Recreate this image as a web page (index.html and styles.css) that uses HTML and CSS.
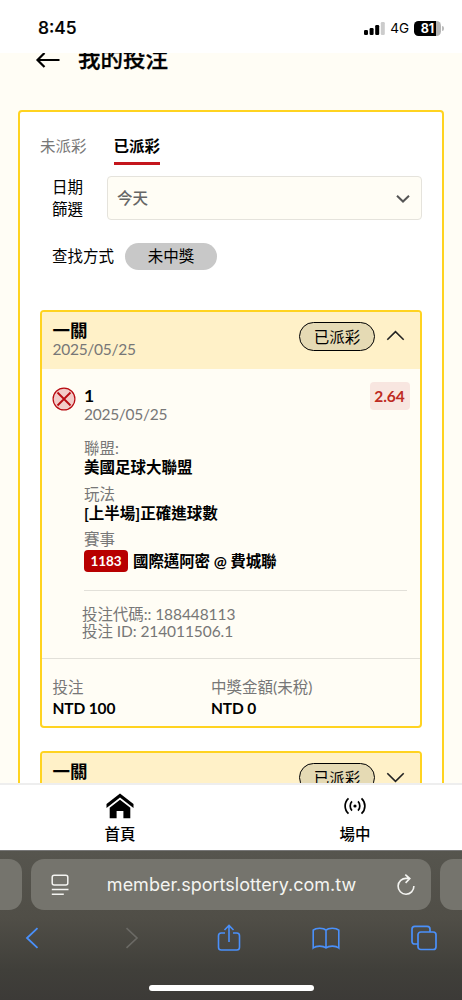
FILE: index.html
```html
<!DOCTYPE html>
<html lang="zh-Hant">
<head>
<meta charset="utf-8">
<title>我的投注</title>
<link rel="stylesheet" href="styles.css">
</head>
<body>
<div class="phone">
  <header class="status">
    <span class="clock">8:45</span>
    <div class="status-right">
      <svg class="signal" width="21" height="13" viewBox="0 0 21 13"><rect x="0" y="8" width="4" height="5" rx="1.2"/><rect x="5.6" y="6" width="4" height="7" rx="1.2"/><rect x="11.2" y="3" width="4" height="10" rx="1.2"/><rect x="16.8" y="0" width="4" height="13" rx="1.2" fill="#ccc"/></svg>
      <span class="net">4G</span>
      <span class="battery">81</span><span class="nub"></span>
    </div>
  </header>

  <main class="page">
    <div class="title-row">
      <svg width="26" height="18" viewBox="0 0 26 18" fill="none" stroke="#000" stroke-width="2.2"><path d="M24.500 9H2.500M9.500 2 2.500 9l7 7"/></svg>
      <h1 class="title">我的投注</h1>
    </div>
    <section class="panel">
      <nav class="tabs">
        <span class="tab">未派彩</span>
        <span class="tab active">已派彩</span>
      </nav>
      <div class="filter">
        <span class="filter-label">日期篩選</span>
        <div class="select"><span>今天</span>
          <svg width="14" height="9" viewBox="0 0 14 9" fill="none" stroke="#555" stroke-width="2"><path d="M1 1.700 7 7.500l6-5.800"/></svg>
        </div>
      </div>
      <div class="search">
        <span>查找方式</span><span class="chip">未中獎</span>
      </div>

      <article class="bet">
        <div class="bet-head">
          <div><div class="bet-title">一關</div><div class="date">2025/05/25</div></div>
          <div class="head-right"><span class="state">已派彩</span>
            <svg width="19" height="13" viewBox="0 0 19 13" fill="none" stroke="#222" stroke-width="1.600"><path d="M1.300 9.800 9.500 1.700l8.200 8.100"/></svg>
          </div>
        </div>
        <div class="leg">
          <svg class="lost" width="24" height="24" viewBox="0 0 24 24"><circle cx="12" cy="12" r="10.900" fill="#f2cbc8" stroke="#b80b12" stroke-width="1.200"/><path d="M5.500 5.500l13 13M18.500 5.500l-13 13" stroke="#b80b12" stroke-width="1.800"/></svg>
          <div class="leg-body">
            <div class="leg-top">
              <div><div class="num">1</div><div class="date">2025/05/25</div></div>
              <span class="odds">2.64</span>
            </div>
            <dl class="facts">
              <dt>聯盟:</dt><dd>美國足球大聯盟</dd>
              <dt>玩法</dt><dd>[上半場]正確進球數</dd>
              <dt>賽事</dt><dd class="match"><span class="code">1183</span><span>國際邁阿密 @ 費城聯</span></dd>
            </dl>
            <div class="ids"><div>投注代碼:: 188448113</div><div>投注 ID: 214011506.1</div></div>
          </div>
        </div>
        <div class="totals">
          <div><div class="t-label">投注</div><div class="t-value">NTD 100</div></div>
          <div><div class="t-label">中獎金額(未稅)</div><div class="t-value">NTD 0</div></div>
        </div>
      </article>

      <article class="bet">
        <div class="bet-head shade">
          <div><div class="bet-title">一關</div></div>
          <div class="head-right"><span class="state">已派彩</span>
            <svg width="19" height="11" viewBox="0 0 19 11" fill="none" stroke="#222" stroke-width="1.600"><path d="M1.300 1.200l8.200 8.100 8.200-8.100"/></svg>
          </div>
        </div>
      </article>
    </section>
  </main>

  <nav class="tabbar">
    <div class="tab-item">
      <svg width="28" height="26" viewBox="0 0 28 26"><path d="M14 .5 27.500 11v4L14 4.600.500 15v-4z"/><path d="M14 6.800 24.300 14.800V25.200H17.400V18h-6.800v7.200H3.700V14.800z"/></svg>
      <span>首頁</span>
    </div>
    <div class="tab-item">
      <svg width="22" height="26" viewBox="0 0 22 26" fill="none" stroke="#000" stroke-width="1.700"><circle cx="11" cy="13" r="1.600" fill="#000" stroke="none"/><path d="M8 8.300C5.600 10.500 5.600 15.500 8 17.700M14 8.300C16.400 10.500 16.400 15.500 14 17.700M4.500 5.300C0 9.500 0 16.500 4.500 20.700M17.500 5.300C22 9.500 22 16.500 17.500 20.700"/></svg>
      <span>場中</span>
    </div>
  </nav>

  <footer class="safari">
    <div class="address-row">
      <div class="side left"></div>
      <div class="address">
        <svg width="18" height="22" viewBox="0 0 18 22" fill="none" stroke="#f4f4f1" stroke-width="1.500"><rect x="1.200" y="1.200" width="15.600" height="9.800" rx="2"/><path d="M.8 15.500h16.700M.8 20.200h12"/></svg>
        <span class="url">member.sportslottery.com.tw</span>
        <svg width="18" height="22" viewBox="0 0 18 22" fill="none" stroke="#f4f4f1" stroke-width="1.600"><path d="M16.900 12.100A7.900 7.900 0 1 1 9.500 4.400l3.300.2M8.300.6l4.500 4-4.200 4.300"/></svg>
      </div>
      <div class="side right"></div>
    </div>
    <div class="tools">
      <svg width="14" height="28" viewBox="0 0 14 28" fill="none" stroke="#4a90fa" stroke-width="1.800"><path d="M12.500 4.200 2 14l10.500 9.800"/></svg>
      <svg width="14" height="28" viewBox="0 0 14 28" fill="none" stroke="#6b6a65" stroke-width="1.600"><path d="M1.500 4.200 12 14 1.500 23.800"/></svg>
      <svg width="24" height="28" viewBox="0 0 24 28" fill="none" stroke="#4a90fa" stroke-width="1.600"><path d="M8 9H4.200Q1.500 9 1.500 11.700v11.600Q1.500 26 4.200 26h15.600q2.700 0 2.700-2.700V11.700Q22.500 9 19.800 9H16M12 18V1.500M7.500 6 12 1.500 16.500 6"/></svg>
      <svg width="28" height="28" viewBox="0 0 28 28" fill="none" stroke="#4a90fa" stroke-width="1.600"><path d="M14 6.200C11.500 3.500 4 3.500 1.200 6.200V24c3-2.500 10-2.500 12.800 0 2.800-2.500 9.800-2.500 12.800 0V6.200C24 3.500 16.500 3.500 14 6.200V24"/></svg>
      <svg width="26" height="28" viewBox="0 0 26 28" fill="none" stroke="#4a90fa" stroke-width="1.700"><rect x="7" y="8" width="18" height="17.500" rx="2.800"/><path d="M7 20H3.800Q1 20 1 17.200V5.200Q1 2.400 3.800 2.400h12.400Q19 2.400 19 5.200V8"/></svg>
    </div>
    <div class="home"></div>
  </footer>
</div>
</body>
</html>
```
FILE: styles.css
```css
* { box-sizing: border-box; }
body { margin: 0; background: #fff; color: #000; font: 15.5px/20px Lato, "Noto Sans CJK TC", sans-serif; }
svg { display: block; flex: none; }
.phone { width: 462px; height: 1000px; display: flex; flex-direction: column; overflow: hidden; }

.status { height: 53px; flex: none; display: flex; justify-content: space-between; padding: 17px 18px 0 38px; font-family: Inter, sans-serif; }
.clock { font-size: 17.5px; font-weight: 500; line-height: 22px; -webkit-text-stroke: .2px #000; }
.status-right { display: flex; align-items: center; height: 22px; }
.net { font-size: 13.5px; font-weight: 400; margin: 0 5px; }
.battery { width: 27px; height: 15px; border-radius: 4.5px; background: linear-gradient(90deg, #000 81%, #b5b5b5 81%); color: #fff; font-size: 12.5px; font-weight: 700; line-height: 15px; text-align: center; }
.nub { width: 2px; height: 5px; margin-left: 1px; border-radius: 0 2px 2px 0; background: #bbb; }

.page { flex: 1; min-height: 0; overflow: hidden; background: #fffdf5; }
.title-row { display: flex; align-items: center; gap: 17px; height: 30px; margin: -8px 0 35px; padding-left: 35px; }
.title { margin: 0; padding-bottom: 2px; font-size: 22.5px; line-height: 30px; font-weight: 500; -webkit-text-stroke: .3px #000; }
.panel { margin: 0 18px; border: 2px solid #ffd320; border-radius: 4px; background: #fff; padding: 24px 20px; }
.tabs { display: flex; gap: 27px; height: 30px; }
.tab { color: #777; }
.active { color: #000; font-weight: 700; border-bottom: 3px solid #c4161c; height: 28.5px; }
.filter { display: flex; align-items: center; margin-top: 10px; padding-left: 12px; }
.filter-label { width: 55px; padding-right: 20px; line-height: 22px; }
.select { flex: 1; height: 44px; border: 1px solid #e5e3dc; border-radius: 4px; background: #fffdf5; display: flex; align-items: center; justify-content: space-between; padding: 0 11px 0 9px; color: #666; font-weight: 500; }
.search { display: flex; align-items: center; gap: 11px; height: 28px; margin: 22px 0 40px 12px; }
.chip { width: 92px; height: 27px; border-radius: 14px; background: #c8c8c8; line-height: 27px; text-align: center; }

.bet { border: 2px solid #ffd320; border-radius: 4px; background: #fffdf5; margin-bottom: 23px; overflow: hidden; }
.bet-head { height: 57px; background: #fff1c8; display: flex; justify-content: space-between; padding: 9px 15px 0 10.5px; }
.bet-title { font-size: 17.5px; font-weight: 700; line-height: 20px; margin-bottom: -1px; }
.date { color: #777; line-height: 18px; letter-spacing: -.28px; }
.head-right { display: flex; align-items: center; gap: 11px; height: 30px; }
.state { width: 76px; height: 29px; border: 1.5px solid #000; border-radius: 15px; background: #e5dab4; text-align: center; line-height: 28px; }
.shade { background: linear-gradient(#fff1c8 60%, #f7e8bc); }
.leg { display: flex; padding: 13px 10.5px 18px 10px; gap: 8px; }
.lost { margin-top: 5px; }
.leg-body { flex: 1; }
.leg-top { display: flex; justify-content: space-between; align-items: flex-start; }
.num { font-size: 17.5px; font-weight: 700; line-height: 18px; margin-top: 5px; }
.odds { width: 40px; height: 28px; border-radius: 4px; background: #f8e6e0; color: #be2a22; font-weight: 700; line-height: 28px; text-align: center; }
.facts { margin: 16px 3px 0 0; padding-bottom: 18px; border-bottom: 1px solid #e2e0d9; line-height: 19px; }
.facts dt { color: #777; margin-top: 8px; }
.facts dt:first-child { margin-top: 0; }
.facts dt:last-of-type { margin-top: 7px; }
.facts dd { margin: 0; font-weight: 700; }
.facts .match { display: flex; align-items: center; gap: 5px; height: 22px; margin-top: 1px; letter-spacing: -.1px; }
.code { width: 44px; height: 22px; border-radius: 4px; background: #b80000; color: #fff; font-size: 13.5px; line-height: 22px; text-align: center; }
.ids { margin: 15px 0 0 -2px; color: #777; line-height: 17px; letter-spacing: -.08px; }
.totals { display: grid; grid-template-columns: 158.5px 1fr; border-top: 1px solid #e2e0d9; padding: 18px 10.5px 7px; }
.t-label { color: #777; line-height: 21px; }
.t-value { font-weight: 700; line-height: 21px; letter-spacing: -.15px; }

.tabbar { height: 67px; flex: none; display: grid; grid-template-columns: 240px 230px; border-top: 2px solid #eee; background: #fff; font-weight: 500; }
.tab-item { display: flex; flex-direction: column; align-items: center; gap: 5px; padding-top: 8px; line-height: 21px; }

.safari { height: 150px; flex: none; background: linear-gradient(#56554e, #504e47 45%, #403f3a 80%, #3c3a37); border-top: 1px solid #777; }
.address-row { display: flex; justify-content: space-between; padding-top: 8px; }
.side { width: 22px; height: 51px; background: #75746d; }
.left { border-radius: 0 13px 13px 0; }
.right { border-radius: 13px 0 0 13px; }
.address { width: 400px; height: 51px; border-radius: 13px; background: #75746d; display: flex; align-items: center; justify-content: space-between; padding: 0 16px 0 20px; }
.url { color: #f4f4f1; font: 18px/22px Inter, sans-serif; white-space: nowrap; padding-right: 3px; }
.tools { display: grid; grid-template-columns: 64px 136px 58px 136px 60px; justify-items: center; margin-top: 14px; }
.home { width: 165px; height: 6px; border-radius: 3px; background: #fff; margin: 33px auto 0; }
```
